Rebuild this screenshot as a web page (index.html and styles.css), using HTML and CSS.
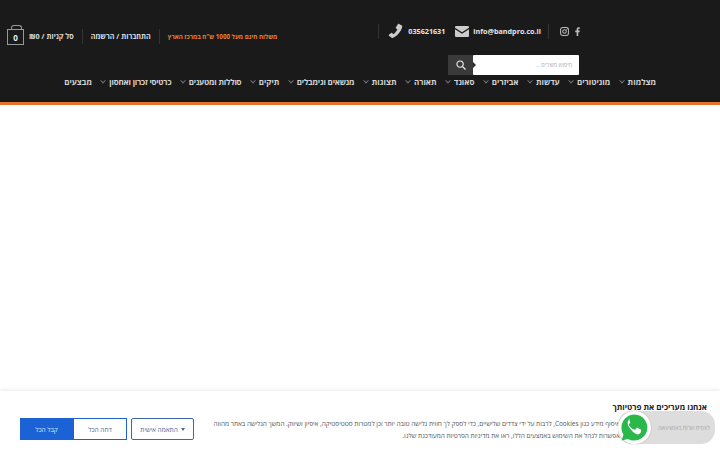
FILE: index.html
```html
<!DOCTYPE html>
<html lang="he" dir="rtl">
<head>
<meta charset="utf-8">
<title>BandPro</title>
<link rel="stylesheet" href="styles.css">
</head>
<body>
<header class="header">
  <div class="top">
    <div class="contact">
      <a class="social" dir="ltr">
        <svg class="ig" viewBox="0 0 16 16" width="9" height="9"><rect x="1" y="1" width="14" height="14" rx="4" fill="none" stroke="#bbb" stroke-width="1.8"/><circle cx="8" cy="8" r="3.2" fill="none" stroke="#bbb" stroke-width="1.8"/><circle cx="12" cy="4" r="1" fill="#bbb"/></svg>
        <svg class="fb" viewBox="0 0 8 14" width="5" height="9"><path d="M5.200 14V8h2.100l.4-2.500H5.200V4c0-.8.3-1.300 1.300-1.300h1.300V.4C7.500.3 6.700.2 5.800.2 3.900.2 2.600 1.400 2.600 3.600v1.900H.4V8h2.200v6z" fill="#bbb"/></svg>
      </a>
      <span class="sep"></span>
      <a class="contact-item"><span class="ltr">info@bandpro.co.il</span><svg viewBox="0 0 14 11" width="14" height="11"><path d="M0 1.200A1.200 1.200 0 0 1 1.200 0h11.600A1.200 1.200 0 0 1 14 1.200v.5L7 6.200 0 1.700z" fill="#ccc"/><path d="M0 3.200l7 4.500 7-4.500v6.600a1.200 1.200 0 0 1-1.200 1.200H1.200A1.200 1.200 0 0 1 0 9.800z" fill="#ccc"/></svg></a>
      <a class="contact-item phone"><span class="ltr">035621631</span><svg viewBox="0 0 16 16" width="15" height="16"><path d="M11.800.4l2.900 1.700c.5.300.7.800.5 1.300-1.300 5-5 9.500-10.200 12-.6.200-1.200.1-1.600-.4L1 13c-.4-.5-.3-1.100.2-1.400l2.300-1.500c.4-.2.900-.1 1.200.2l1 1.200c1.900-1.200 3.400-3 4.300-5.300L8.600 5.300c-.4-.2-.5-.7-.3-1.100l2.200-3.500c.3-.4.900-.5 1.300-.3z" fill="#ccc"/></svg></a>
      <span class="sep"></span>
    </div>
    <div class="account">
      <span class="shipping">משלוח חינם מעל 1000 ש"ח במרכז הארץ</span>
      <span class="sep"></span>
      <a class="login">התחברות / הרשמה</a>
      <span class="sep"></span>
      <a class="cart-label">סל קניות / <span class="ltr">₪0</span></a>
      <span class="cart"><span>0</span></span>
    </div>
  </div>
  <div class="search-row">
    <div class="search">
      <span class="search-input">חיפוש מוצרים ...</span>
      <span class="search-btn"><svg viewBox="0 0 16 16" width="10" height="10"><circle cx="6.500" cy="6.500" r="5" fill="none" stroke="#eee" stroke-width="1.800"/><path d="M10.200 10.200l5 5" stroke="#eee" stroke-width="2"/></svg></span>
    </div>
  </div>
  <nav class="nav">
    <a class="has-sub">מצלמות</a>
    <a class="has-sub">מוניטורים</a>
    <a class="has-sub">עדשות</a>
    <a class="has-sub">אביזרים</a>
    <a class="has-sub">סאונד</a>
    <a class="has-sub">תאורה</a>
    <a class="has-sub">תצוגות</a>
    <a class="has-sub tight">מנשאים וגימבלים</a>
    <a class="has-sub">תיקים</a>
    <a class="has-sub tight">סוללות ומטענים</a>
    <a class="has-sub tight">כרטיסי זכרון ואחסון</a>
    <a>מבצעים</a>
  </nav>
</header>

<section class="cookie">
  <div class="cookie-text">
    <h2>אנחנו מעריכים את פרטיותך</h2>
    <p>איסוף מידע כגון Cookies, לרבות על ידי צדדים שלישיים, כדי לספק לך חווית גלישה טובה יותר וכן למטרות סטטיסטיקה, איפיון ושיווק. המשך הגלישה באתר מהווה<br>אפשרות לנהל את השימוש באמצעים הללו, ראו את מדיניות הפרטיות המעודכנת שלנו.</p>
  </div>
  <div class="cookie-actions">
    <button class="btn btn-custom"><i class="caret"></i><span>התאמה אישית</span></button>
    <div class="btn-pair">
      <button class="btn btn-reject">דחה הכל</button>
      <button class="btn btn-accept">קבל הכל</button>
    </div>
  </div>
</section>

<aside class="whatsapp">
  <span class="wa-label">לצפית שרות באמצעאוה</span>
  <span class="wa-icon"><svg viewBox="0 0 32 32" width="31" height="31"><path d="M16 2.500C8.500 2.500 2.500 8.500 2.500 16c0 2.600.8 5.100 2.100 7.200L2.700 29.500l6.500-1.700A13.500 13.500 0 1 0 16 2.500z" fill="#2ab84a"/><path d="M11.800 8.600c-.4 0-1 .1-1.500.7-.6.6-2 1.900-2 4.600s2 5.300 2.200 5.700c.3.400 3.900 6 9.500 8 1.800-.2 3.700-1.500 4.100-3 .4-1.400.4-2.500.3-2.800-.1-.2-.5-.4-1-.6l-3.300-1.600c-.5-.2-.8-.3-1.100.2-.3.5-1.300 1.600-1.500 1.900-.3.300-.6.400-1.100.1-.5-.2-2-.7-3.900-2.400-1.400-1.300-2.400-2.800-2.700-3.300-.3-.5 0-.8.200-1l.8-.9c.2-.3.3-.5.5-.8.2-.3.100-.6 0-.9l-1.500-3.500c-.3-.7-.7-.7-1-.7z" fill="#fff" transform="translate(1.800 -.5) scale(.86)"/></svg></span>
</aside>
</body>
</html>
```
FILE: styles.css
```css
* { box-sizing: border-box; }
html, body { margin: 0; height: 100%; overflow: hidden; }
body { position: relative; background: #fff; font-family: "Open Sans", "Liberation Sans", sans-serif; color: #fff; }
a { color: inherit; text-decoration: none; }
.ltr { direction: ltr; unicode-bidi: isolate; }

.header { height: 105px; background: #1a1a1a; border-bottom: 3px solid #e8732e; }
.top { display: flex; justify-content: space-between; align-items: flex-start; height: 55px; padding: 0 140px 0 7px; }
.contact, .account { display: flex; align-items: center; height: 16px; }
.contact { margin-top: 23px; font-size: 7.200px; font-weight: 700; color: #e6e6e6; }
.account { margin-top: 29px; font-size: 7.200px; font-weight: 700; color: #ddd; }
.social { display: flex; align-items: center; gap: 6px; margin-left: 11px; }
.ig, .fb { display: block; }
.sep { width: 1px; height: 15px; background: #333; }
.contact > .sep:nth-child(2) { margin-left: 7px; }
.contact-item { display: flex; align-items: center; gap: 4px; margin-left: 10px; }
.phone { gap: 5px; margin-left: 9px; }
.shipping { color: #e8842e; font-size: 6.200px; margin-left: 8px; padding-bottom: 2px; }
.account .sep { margin-left: 8px; margin-top: -2px; }
.login { margin-left: 8px; padding-bottom: 2px; }
.cart-label { margin-left: 5px; padding-bottom: 2px; }
.cart { position: relative; display: flex; align-items: center; justify-content: center; width: 17px; height: 16px; border: 1px solid #999; font-size: 8px; color: #eee; }
.cart::before { content: ""; position: absolute; top: -5px; left: 3px; width: 9px; height: 4px; border: 1px solid #999; border-bottom: 0; border-radius: 3px 3px 0 0; }

.search-row { display: flex; height: 20px; padding-right: 141px; }
.search { display: flex; width: 131px; height: 20px; }
.search-input { flex: 1; background: #fff; color: #aaa; font-size: 5.600px; line-height: 20px; padding-right: 7px; border-radius: 1px; }
.search-btn { position: relative; width: 25px; background: #3a3a3a; display: flex; align-items: center; justify-content: center; }
.search-btn::before { content: ""; position: absolute; right: -3px; top: 7px; border-style: solid; border-width: 3px 0 3px 3px; border-color: transparent transparent transparent #2a2a2a; }

.nav { display: flex; padding-right: 64px; gap: 9.400px; margin-top: 1px; font-size: 8px; font-weight: 700; line-height: 12px; color: #d4d4d4; white-space: nowrap; }
.has-sub { display: flex; align-items: center; gap: 4px; }
.has-sub::after { content: ""; width: 3px; height: 3px; border-left: 1px solid #777; border-bottom: 1px solid #777; transform: rotate(-45deg) translate(1px, -1px); }
.tight { letter-spacing: -0.2px; }

.cookie { position: absolute; right: 0; left: 0; bottom: 0; height: 59px; background: #fff; box-shadow: 0 0 5px rgba(0,0,0,.12); display: flex; justify-content: space-between; padding: 10px 13px 0 20px; color: #444; }
.cookie-text { width: 500px; white-space: nowrap; }
.cookie-text h2 { margin: 0 0 5px; font-size: 8px; line-height: 12px; font-weight: 700; color: #222; }
.cookie-text p { margin: 0; padding-right: 87px; font-size: 6.470px; line-height: 12px; color: #555; }
.cookie-actions { display: flex; gap: 4px; align-items: flex-end; padding-bottom: 10px; margin-top: auto; }
.btn { font: inherit; font-size: 6.500px; height: 22px; padding: 0; border: 1.500px solid #1e62d0; background: #fff; color: #46689a; cursor: pointer; }
.btn-custom { width: 63px; display: flex; align-items: center; justify-content: center; gap: 3px; border-radius: 2px; border-color: #3f66a8; }
.caret { width: 0; height: 0; border-style: solid; border-width: 3px 2.500px 0; border-color: #46689a transparent transparent; }
.btn-pair { display: flex; }
.btn-reject { width: 54px; }
.btn-accept { width: 53px; background: #1a62d6; color: #dfe9fa; }

.whatsapp { position: absolute; left: 618px; top: 411px; width: 97px; height: 33px; background: #ddd; border-radius: 14px; display: flex; align-items: center; color: #a5a5a5; font-size: 5.500px; }
.wa-label { flex: 1; text-align: center; margin-left: 34px; white-space: nowrap; }
.wa-icon { position: absolute; left: 0; top: 0; width: 33px; height: 33px; border-radius: 50%; background: #fff; display: flex; align-items: center; justify-content: center; box-shadow: 0 0 2px rgba(0,0,0,.2); }
```
